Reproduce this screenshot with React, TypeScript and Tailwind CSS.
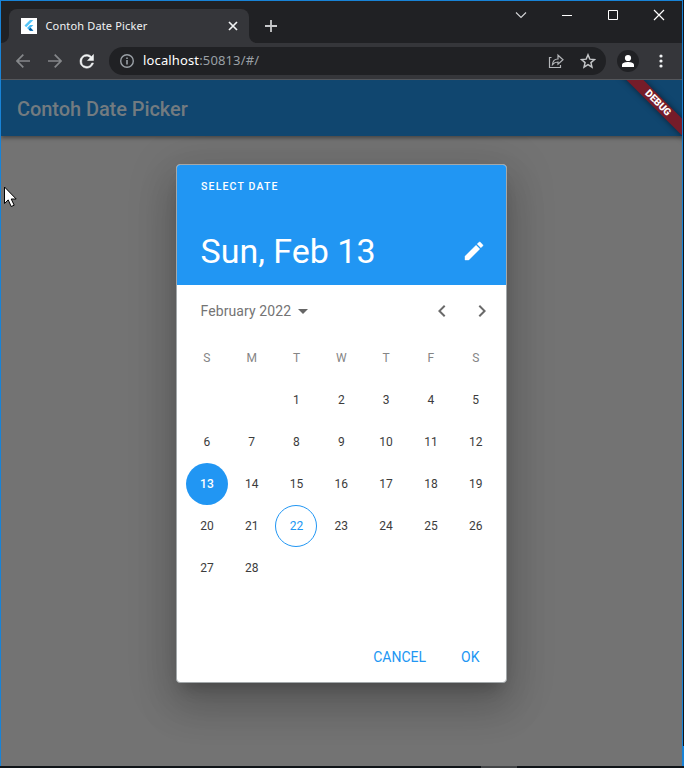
import React from "react";

const weekdays = ["S", "M", "T", "W", "T", "F", "S"];
const cells: (number | null)[] = [null, null, ...Array.from({ length: 28 }, (_, i) => i + 1)];

function TabStrip() {
  return (
    <div className="flex h-[42px] items-start">
      <div className="flex h-[42px] w-2 items-end">
        <div className="h-2 w-2 bg-[#35363a]">
          <div className="h-2 w-2 rounded-br-lg bg-[#202124]" />
        </div>
      </div>
      <div className="mt-2 flex h-[34px] w-[240px] items-center rounded-t-lg bg-[#35363a] pl-3 pr-[11px]">
        <div className="h-4 w-4 shrink-0 bg-white">
          <svg width="16" height="16" viewBox="0 0 16 16">
            <path d="M9 2h3.400L5.200 9.200 3.500 7.500z" fill="#54c5f8" />
            <path d="M9 7h3.400L9.600 9.800 12.400 12.800H9L6 9.900z" fill="#42b8f4" />
            <path d="M7.700 11.500l1.800-1.700 2.900 3H9z" fill="#01579b" />
          </svg>
        </div>
        <span className="ml-[8.500px] whitespace-pre font-['Noto_Sans',sans-serif] text-[11px] tracking-[0.150px] text-[#f1f3f4]">Contoh Date Picker</span>
        <svg className="ml-auto" width="10" height="10" viewBox="0 0 10 10" stroke="#f1f3f4" strokeWidth="1.7">
          <path d="M1 1l8 8M9 1L1 9" />
        </svg>
      </div>
      <div className="flex h-[42px] w-2 items-end">
        <div className="h-2 w-2 bg-[#35363a]">
          <div className="h-2 w-2 rounded-bl-lg bg-[#202124]" />
        </div>
      </div>
      <svg className="ml-2 mt-[19px]" width="12" height="12" viewBox="0 0 12 12" stroke="#c8c9cb" strokeWidth="1.8">
        <path d="M6 0v12M0 6h12" />
      </svg>
      <svg className="ml-auto mr-[17px] mt-[8px] shrink-0" width="150" height="12" viewBox="0 0 150 12" fill="none" stroke="#fff">
        <path d="M1 3.500l5 5 5-5" stroke="#d5d6d8" strokeWidth="1.100" />
        <path d="M47 6.500h10" />
        <path d="M93.500 1.500h9v9h-9z" />
        <path d="M139 1l10 10M149 1l-10 10" strokeWidth="1.200" />
      </svg>
    </div>
  );
}

function Toolbar() {
  return (
    <div className="flex h-[37px] items-center border-b border-[#55575b] bg-[#35363a] pl-[15px]">
      <svg width="14" height="14" viewBox="0 0 14 14" fill="none" stroke="#85878a" strokeWidth="1.700">
        <path d="M14 7H1M7.300.7L1 7l6.300 6.300" />
      </svg>
      <svg className="ml-[18px]" width="14" height="14" viewBox="0 0 14 14" fill="none" stroke="#85878a" strokeWidth="1.700">
        <path d="M0 7h13M6.700.7L13 7l-6.300 6.300" />
      </svg>
      <svg className="ml-[12px]" width="24" height="24" viewBox="0 0 24 24">
        <path transform="translate(2.300 2) scale(.86)" fill="#f1f3f4" stroke="#f1f3f4" strokeWidth=".6" d="M17.650 6.350A7.960 7.960 0 0012 4a8 8 0 108 10h-2.080A6 6 0 1112 6c1.660 0 3.140.69 4.220 1.780L13 11h7V4z" />
      </svg>
      <div className="ml-[11px] flex h-7 w-[497px] items-center rounded-full bg-[#202124] pl-[11px] pr-[10px]">
        <svg width="14" height="14" viewBox="0 0 14 14" fill="none" stroke="#9aa0a6" strokeWidth="1.400">
          <circle cx="7" cy="7" r="6.300" />
          <path d="M7 6v4.500M7 3.500V5" strokeWidth="1.600" />
        </svg>
        <span className="ml-[9px] whitespace-pre font-['Noto_Sans',sans-serif] text-[13px] tracking-[0.140px] text-white">
          localhost<span className="text-[#9aa0a6]">:50813/#/</span>
        </span>
        <svg className="ml-auto" width="16" height="16" viewBox="0 0 16 16" fill="none" stroke="#b4b6b9" strokeWidth="1.200">
          <path d="M3.500 4.500H1.500v10h11V12M4.500 11.500c.3-3.700 2.500-5.400 5.500-5.500V2.200l5 4.500-5 4.500V9c-2.500 0-4 .7-5.500 2.500z" />
        </svg>
        <svg className="ml-4" width="16" height="16" viewBox="0 0 24 24" fill="none" stroke="#c4c6c8" strokeWidth="2.200">
          <path d="M12 2.700l2.700 6.500 7 .6-5.300 4.600L18 21.300l-6-3.700-6 3.700 1.600-6.900L2.300 9.800l7-.6z" />
        </svg>
      </div>
      <div className="ml-[11px] flex h-[22px] w-[22px] items-center justify-center rounded-full bg-[#202124]">
        <svg width="14" height="14" viewBox="0 0 14 14" fill="#fff">
          <circle cx="7" cy="4" r="3.100" />
          <path d="M1 13v-2c0-2.200 3.500-3 6-3s6 .8 6 3v2z" />
        </svg>
      </div>
      <svg className="ml-[19.5px]" width="4" height="14" viewBox="0 0 4 14" fill="#f1f3f4">
        <circle cx="2" cy="2" r="1.600" />
        <circle cx="2" cy="7" r="1.600" />
        <circle cx="2" cy="12" r="1.600" />
      </svg>
    </div>
  );
}

function DatePicker() {
  return (
    <div className="flex h-[519px] w-[331px] flex-col overflow-hidden rounded-[4px] border border-[#a3a8aa] bg-white shadow-[0_11px_15px_-7px_rgba(0,0,0,0.2),0_24px_38px_3px_rgba(0,0,0,0.14),0_9px_46px_8px_rgba(0,0,0,0.12)]">
      <div className="flex h-[119.5px] shrink-0 flex-col bg-[#2196f3] pl-[23.500px] pr-[20px] pt-[15px] text-white">
        <span className="pl-[0.5px] text-[10.500px] leading-[14px] font-medium tracking-[1.170px]">SELECT DATE</span>
        <div className="mt-[36px] flex items-center justify-between">
          <span className="whitespace-pre text-[34px] leading-[42px]">Sun, Feb 13</span>
          <svg width="24" height="24" viewBox="0 0 24 24" fill="#fff" stroke="#fff" strokeWidth=".4">
            <path d="M3 17.250V21h3.750L17.810 9.940l-3.750-3.750L3 17.250zM20.710 7.040a.996.996 0 000-1.410l-2.340-2.340a.996.996 0 00-1.410 0l-1.830 1.830 3.750 3.750 1.830-1.830z" />
          </svg>
        </div>
      </div>
      <div className="flex h-[52.5px] items-center pl-[23.500px] text-[#747474]">
        <span className="pt-px text-[14px] tracking-[0.100px]">February 2022</span>
        <svg width="24" height="24" viewBox="0 0 24 24" fill="#666">
          <path d="M7 10l5 5 5-5z" />
        </svg>
        <svg className="ml-auto" width="24" height="24" viewBox="0 0 24 24" fill="#6a6a6a">
          <path d="M15.410 7.410L14 6l-6 6 6 6 1.410-1.410L10.830 12z" />
        </svg>
        <svg className="ml-4 mr-[12px]" width="24" height="24" viewBox="0 0 24 24" fill="#6a6a6a">
          <path d="M10 6L8.590 7.410 13.170 12l-4.580 4.590L10 18l6-6z" />
        </svg>
      </div>
      <div className="grid auto-rows-[42px] grid-cols-7 pl-[7.500px] pr-[7.900px] text-center text-[12px] leading-[42px] text-[#3c3c3c]">
        {weekdays.map((d, i) => (
          <div key={i} className="text-[#858585]">{d}</div>
        ))}
        {cells.map((n, i) => (
          <div key={i} className="flex justify-center">
            {n === 13 ? (
              <span className="h-[42px] w-[42px] rounded-full bg-[#2196f3] font-medium text-white">13</span>
            ) : n === 22 ? (
              <span className="h-[42px] w-[42px] rounded-full border border-[#2196f3] leading-[40px] text-[#2196f3]">22</span>
            ) : (
              n
            )}
          </div>
        ))}
      </div>
      <div className="mt-auto flex h-[50px] items-center justify-end pr-[26.500px] text-[14px] text-[#2196f3]">
        <span>CANCEL</span>
        <span className="ml-[35px]">OK</span>
      </div>
    </div>
  );
}

export default function App() {
  return (
    <div className="relative flex h-[768px] w-[684px] flex-col overflow-hidden bg-[#101418] font-['Roboto',sans-serif]">
      <div className="flex h-[766px] w-[683px] flex-col border-x border-t border-[#1883d7] bg-[#202124]">
        <TabStrip />
        <Toolbar />
        <div className="relative flex min-h-0 flex-1 flex-col overflow-hidden bg-[#737373]">
          <header className="relative flex h-14 shrink-0 items-center bg-[#10466f] pl-4 shadow-[0_2px_4px_rgba(0,0,0,0.4)]">
            <span className="pt-[2px] text-[20px] font-medium tracking-[-0.070px] text-[#737b80]">Contoh Date Picker</span>
          </header>
          <div className="absolute top-[17px] left-[602px] flex h-[12px] w-[120px] -translate-x-[5px] rotate-45 items-center justify-center bg-[#761c29] text-[10px] leading-[12px] font-black text-white shadow-[0_0_6px_rgba(0,0,0,0.5)]">
            DEBUG
          </div>
          <main className="flex flex-1 justify-center pt-[28px]">
            <DatePicker />
          </main>
        </div>
      </div>
      <div className="flex h-[2px]">
        <div className="ml-[481px] h-[2px] w-9 bg-[#434547]" />
      </div>
      <div className="absolute top-[746px] right-0 h-5 w-px bg-[#1883d7]" />
      <svg className="absolute top-[186px] left-[4px]" width="13" height="22" viewBox="0 0 13 22">
        <path d="M.5 1v16.500l3.700-3.600 3 6.600 3-1.300-3-6.200h5z" fill="#fff" stroke="#000" />
      </svg>
    </div>
  );
}
